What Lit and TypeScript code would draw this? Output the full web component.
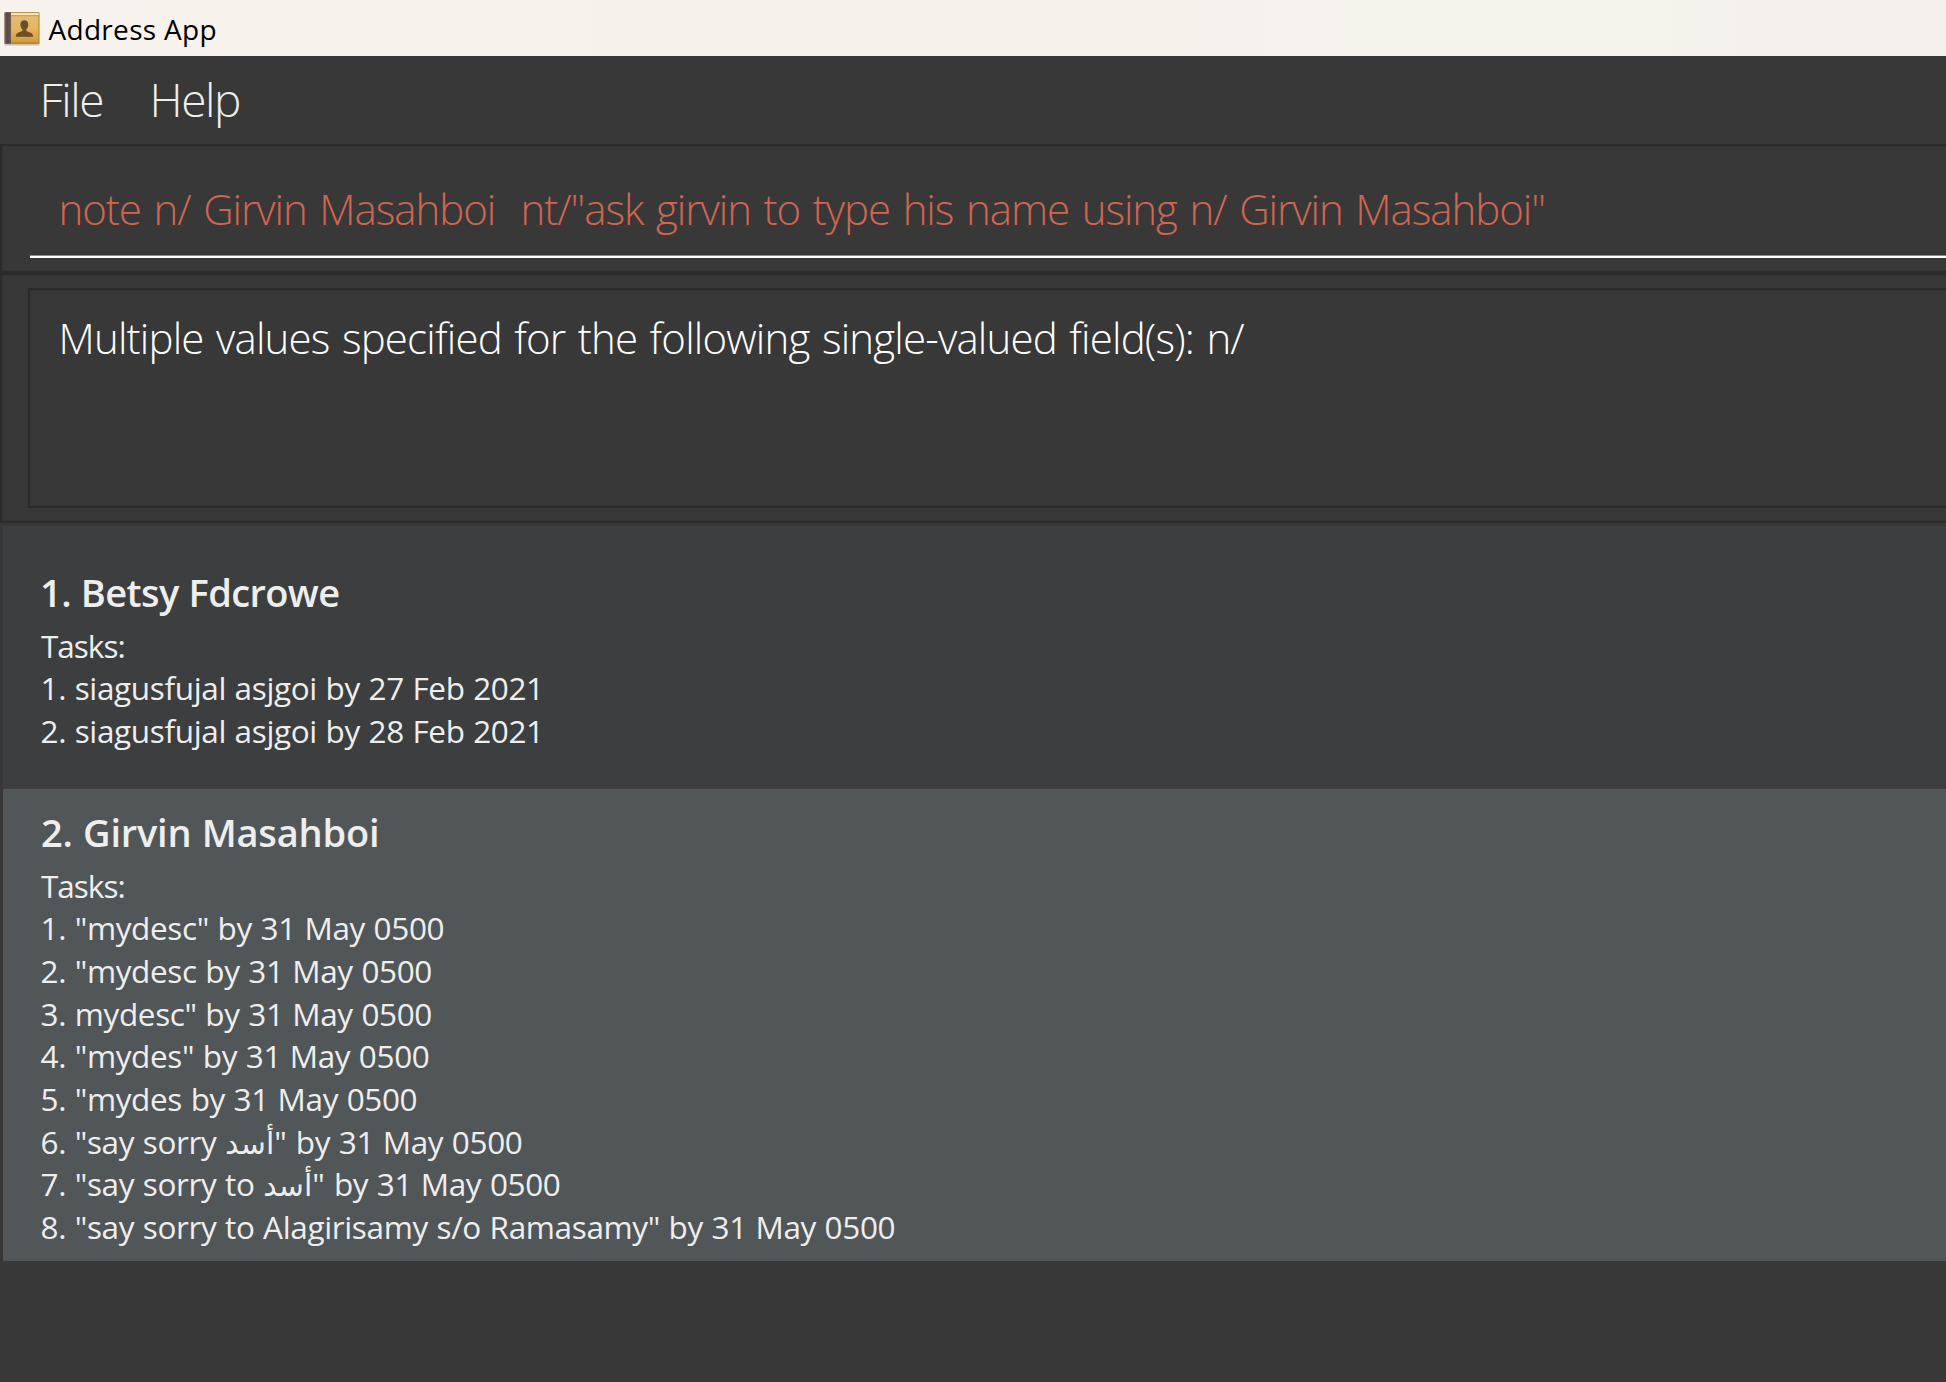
import { LitElement, html, css } from "lit";
import { customElement, property } from "lit/decorators.js";
import { classMap } from "lit/directives/class-map.js";
import { styleMap } from "lit/directives/style-map.js";

interface Contact {
  name: string;
  tracking: number;
  tasks: string[];
}

const CONTACTS: Contact[] = [
  {
    name: "Betsy Fdcrowe",
    tracking: -0.6,
    tasks: ["siagusfujal asjgoi by 27 Feb 2021", "siagusfujal asjgoi by 28 Feb 2021"],
  },
  {
    name: "Girvin Masahboi",
    tracking: -0.2,
    tasks: [
      '"mydesc" by 31 May 0500',
      '"mydesc by 31 May 0500',
      'mydesc" by 31 May 0500',
      '"mydes" by 31 May 0500',
      '"mydes by 31 May 0500',
      '"say sorry أسد" by 31 May 0500',
      '"say sorry to أسد" by 31 May 0500',
      '"say sorry to Alagirisamy s/o Ramasamy" by 31 May 0500',
    ],
  },
];

/** Splits out Arabic runs so that they keep their joined shaping. */
const withArabic = (text: string) =>
  text
    .split(/([\u0600-\u06ff]+)/)
    .map((part) => (/[\u0600-\u06ff]/.test(part) ? html`<bdi class="arabic">${part}</bdi>` : part));

@customElement("contact-card")
export class ContactCard extends LitElement {
  @property({ type: Number }) index = 1;
  @property({ attribute: false }) contact!: Contact;

  static styles = css`
    :host { display: block; }
    .card {
      box-sizing: border-box;
      height: 263px;
      padding: 41px 0 0 37px;
      background: #3c3e3f;
      color: #eeeeee;
    }
    .card.even { height: 472px; padding-top: 18px; background: #515658; }
    .name { font-size: 38px; font-weight: 600; line-height: 50px; margin-bottom: 7.6px; word-spacing: 0.6px; white-space: pre; }
    .even .name { padding-left: 1px; }
    .tasks { font-size: 31.5px; line-height: 42.67px; letter-spacing: -0.36px; word-spacing: 0.8px; white-space: nowrap; }
    .label { letter-spacing: -1px; padding-left: 1px; }
    .row { padding-left: 0.5px; }
    .arabic { font-family: "DejaVu Sans", sans-serif; font-size: 30px; letter-spacing: 0; line-height: 1; }
  `;

  render() {
    return html`
      <div class=${classMap({ card: true, even: this.index % 2 === 0 })}>
        <div class="name" style=${styleMap({ letterSpacing: `${this.contact.tracking}px` })}>${this.index}. ${this.contact.name}</div>
        <div class="tasks">
          <div class="label">Tasks:</div>
          ${this.contact.tasks.map((t, i) => html`<div class="row">${i + 1}. ${withArabic(t)}</div>`)}
        </div>
      </div>
    `;
  }
}

@customElement("app-root")
export class AppRoot extends LitElement {
  static styles = css`
    :host {
      display: flex;
      flex-direction: column;
      height: 1382px;
      overflow: hidden;
      background: #383838;
      font-family: "Open Sans", "Noto Sans", sans-serif;
    }
    .title {
      display: flex;
      height: 56px;
      flex: none;
      padding-left: 4px;
      background: linear-gradient(90deg, #f7f2ed, #f7f1ec 60%, #f5f3ec 80%, #f5f3ec 85%, #f6f0ec 90%);
      color: #000;
      font-size: 28px;
      line-height: 58px;
      letter-spacing: 0.3px;
    }
    .icon { width: 37px; height: 36px; margin: 11px 7.5px 0 0; }
    .menu {
      display: flex;
      flex: none;
      height: 88px;
      padding-left: 39.5px;
      color: #eeeeee;
      font-size: 46px;
      font-weight: 300;
      line-height: 86px;
      letter-spacing: -1.4px;
    }
    .menu span:first-child { width: 110px; }
    .pane {
      flex: none;
      box-sizing: border-box;
      border: 2px solid #2b2b2b;
      border-right: 0;
      box-shadow: inset 1px 1px #333333, inset 0 -1px #333333;
      font-size: 42px;
      font-weight: 300;
      white-space: pre;
    }
    .command { height: 129px; padding: 24px 0 0 28px; }
    .input {
      padding: 0 0 10px 28.5px;
      height: 76px;
      line-height: 77.4px;
      color: #d06651;
      letter-spacing: -1.05px;
      word-spacing: 2.8px;
      border-bottom: 2px solid #ffffff;
      box-shadow: inset 0 -1px #8c8c8c;
    }
    .result { height: 250px; padding: 13px 0 0 26px; }
    .display {
      box-sizing: border-box;
      height: 220px;
      padding-left: 28.5px;
      border: 2px solid #2b2b2b;
      border-right: 0;
      box-shadow: inset 1px 1px #333333, inset 0 -1px #333333;
      line-height: 95px;
      color: #ffffff;
      letter-spacing: -0.82px;
      word-spacing: 2.3px;
    }
    .list { flex: 1; padding: 3px 0 0 3px; }
  `;

  render() {
    return html`
      <div class="title">
        <svg class="icon" viewBox="0 0 37 36">
          <defs>
            <linearGradient id="cover" x1="0" y1="0" x2="0" y2="1">
              <stop offset="0" stop-color="#e4bd78" />
              <stop offset="0.5" stop-color="#e6b661" />
              <stop offset="1" stop-color="#d39c3a" />
            </linearGradient>
            <linearGradient id="spine" x1="0" y1="0" x2="1" y2="0">
              <stop offset="0" stop-color="#7b6c68" />
              <stop offset="0.35" stop-color="#55474a" />
              <stop offset="1" stop-color="#6a5850" />
            </linearGradient>
          </defs>
          <rect x="0.5" y="31" width="35" height="3.4" rx="1" fill="#b9ada0" opacity="0.7" />
          <rect x="0.5" y="1.2" width="35" height="31.6" rx="1" fill="#a57625" />
          <rect x="7" y="2.4" width="27.6" height="29.2" fill="url(#cover)" />
          <rect x="7" y="2.2" width="27.6" height="1.5" fill="#fff3d6" />
          <rect x="7" y="4.4" width="27.6" height="0.8" fill="#c29145" />
          <rect x="0.5" y="1.2" width="6.5" height="31.6" rx="0.8" fill="url(#spine)" />
          <path
            d="M20.3 9.2c2.6 0 4 1.7 4 4.2 0 2-.8 3.8-2 4.9v1.8c1 1 6.6.8 6.9 5.6H11.7c.2-4.8 5.7-4.6 6.7-5.6v-1.8c-1.2-1.1-2-2.900-2-4.900 0-2.500 1.300-4.200 3.900-4.200z"
            fill="#67502a"
          />
        </svg>
        <span>Address App</span>
      </div>
      <div class="menu"><span>File</span><span>Help</span></div>
      <div class="pane command"><div class="input">note n/ Girvin Masahboi  nt/"ask girvin to type his name using n/ Girvin Masahboi"</div></div>
      <div class="pane result"><div class="display">Multiple values specified for the following single-valued field(s): n/</div></div>
      <div class="list">
        ${CONTACTS.map((c, i) => html`<contact-card .index=${i + 1} .contact=${c}></contact-card>`)}
      </div>
    `;
  }
}
